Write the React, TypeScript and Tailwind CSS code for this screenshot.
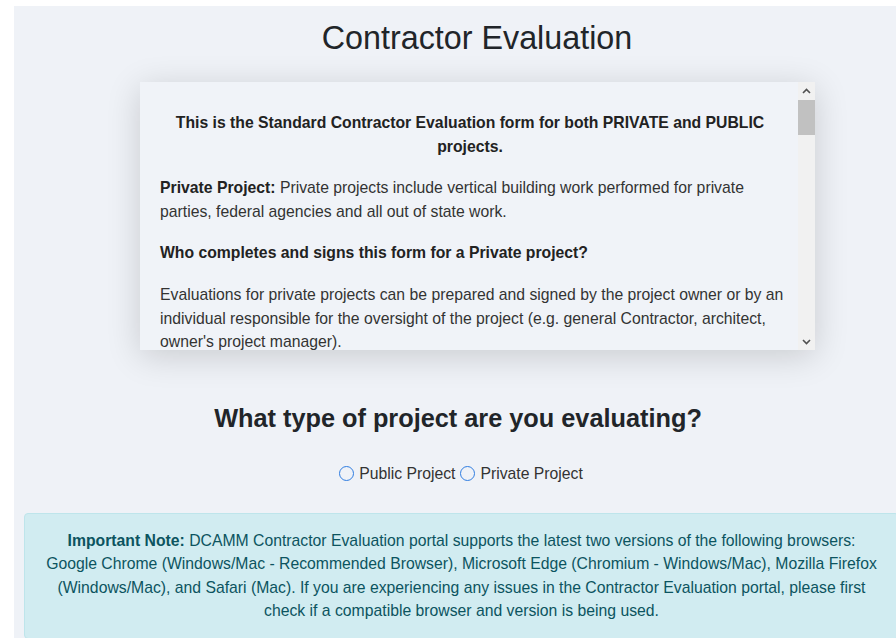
import React from 'react';

// Small chevron used on the scrollbar buttons
const Chevron: React.FC<{ up?: boolean }> = ({ up }) => (
    <svg width="9" height="6" viewBox="0 0 9 6" className="block">
        <path
            d={up ? 'M1 5 L4.5 1.5 L8 5' : 'M1 1 L4.5 4.5 L8 1'}
            fill="none"
            stroke="#505050"
            strokeWidth="1.6"
        />
    </svg>
);

const Radio: React.FC<{ label: string }> = ({ label }) => (
    <label className="inline-flex items-center gap-[5px]">
        <span className="w-[15px] h-[15px] rounded-full border-[1.5px] border-[#2f7de1]" />
        <span>{label}</span>
    </label>
);

export default function App() {
    return (
        <div className="w-[896px] h-[638px] overflow-hidden bg-white pt-[6px] pl-[14px] font-['Liberation_Sans',Arial,sans-serif]">
            <div className="h-full bg-[#eff2f7] pt-[12px]">
                {/* Page title */}
                <h1 className="pl-[44px] text-center text-[32.3px] leading-[40px] text-[#212529]">
                    Contractor Evaluation
                </h1>

                {/* Scrollable instructions box */}
                <div className="ml-[126px] mt-[24px] w-[675px] h-[268px] flex bg-[#f0f3f8] shadow-[0_6px_32px_rgba(0,0,0,0.16)]">
                    <div className="flex-1 overflow-hidden pl-[20px] pr-[11px] pt-[29px] text-[15.75px] leading-[23.6px] text-[#333]">
                        <p className="text-center font-bold text-[#222] mb-[18px] pr-[7px]">
                            This is the Standard Contractor Evaluation form for both PRIVATE and PUBLIC projects.
                        </p>
                        <p className="mb-[18px]">
                            <b className="text-[#222]">Private Project:</b> Private projects include vertical building work performed for private parties, federal agencies and all out of state work.
                        </p>
                        <p className="font-bold text-[#222] mb-[18px]">
                            Who completes and signs this form for a Private project?
                        </p>
                        <p className="mb-[18px]">
                            Evaluations for private projects can be prepared and signed by the project owner or by an individual responsible for the oversight of the project (e.g. general Contractor, architect, owner's project manager).
                        </p>
                        <p>
                            <b className="text-[#222]">Public Project:</b> Public projects include all work performed for public agencies within the state.
                        </p>
                    </div>
                    <div className="w-[17px] flex flex-col bg-[#f1f1f1]">
                        <div className="h-[17px] flex items-center justify-center">
                            <Chevron up />
                        </div>
                        <div className="mt-[1px] h-[35px] bg-[#c1c1c1]" />
                        <div className="flex-1" />
                        <div className="h-[17px] flex items-center justify-center">
                            <Chevron />
                        </div>
                    </div>
                </div>

                {/* Project type question */}
                <h2 className="mt-[52px] pl-[6px] text-center text-[25.3px] leading-[32px] font-bold text-[#212529]">
                    What type of project are you evaluating?
                </h2>

                <div className="mt-[28px] pl-[12px] flex justify-center gap-[5px] text-[15.75px] leading-[23.6px] text-[#333]">
                    <Radio label="Public Project" />
                    <Radio label="Private Project" />
                </div>

                {/* Browser support note */}
                <div className="mt-[27px] ml-[10px] mr-[-3px] rounded-[4px] border border-[#bee5eb] bg-[#d1ecf1] px-[21px] py-[15px] text-center text-[15.75px] leading-[23.6px] text-[#0c5460]">
                    <b>Important Note:</b> DCAMM Contractor Evaluation portal supports the latest two versions of the following browsers: Google Chrome (Windows/Mac - Recommended Browser), Microsoft Edge (Chromium - Windows/Mac), Mozilla Firefox (Windows/Mac), and Safari (Mac). If you are experiencing any issues in the Contractor Evaluation portal, please first check if a compatible browser and version is being used.
                </div>
            </div>
        </div>
    );
}
